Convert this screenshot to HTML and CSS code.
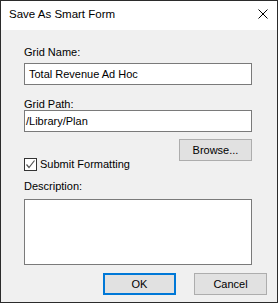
FILE: index.html
```html
<!DOCTYPE html>
<html lang="en">
<head>
    <meta charset="UTF-8">
    <title>Save As Smart Form</title>
    <link rel="stylesheet" href="styles.css">
</head>
<body>
    <div class="dialog">
        <!-- Title bar -->
        <div class="titlebar">
            <span class="title">Save As Smart Form</span>
            <svg class="close" width="10" height="10" viewBox="0 0 10 10">
                <path d="M0.5 0.5 L9.5 9.5 M9.5 0.5 L0.5 9.5" stroke="#000" stroke-width="1" fill="none"/>
            </svg>
        </div>

        <div class="content">
            <label class="label first">Grid Name:</label>
            <div class="field">Total Revenue Ad Hoc</div>

            <label class="label second">Grid Path:</label>
            <div class="field path">/Library/Plan</div>

            <div class="browse-row">
                <button class="btn">Browse...</button>
            </div>

            <div class="check-row">
                <span class="checkbox">
                    <svg width="11" height="11" viewBox="0 0 11 11">
                        <path d="M1.5 5.5 L4 8.5 L9.5 1.5" stroke="#555" stroke-width="1.2" fill="none"/>
                    </svg>
                </span>
                <span>Submit Formatting</span>
            </div>

            <label class="label third">Description:</label>
            <div class="field area"></div>

            <div class="actions">
                <button class="btn default">OK</button>
                <button class="btn">Cancel</button>
            </div>
        </div>
    </div>
</body>
</html>
```

FILE: styles.css
```css
body {
    margin: 0;
    font-family: "Liberation Sans", Arial, sans-serif;
    font-size: 11px;
    line-height: 15px;
    color: #000;
}

.dialog {
    width: 278px;
    height: 303px;
    box-sizing: border-box;
    border: 1px solid #2b2b2b;
    background-color: #f0f0f0;
}

.titlebar {
    height: 29px;
    background-color: #fff;
    display: flex;
    justify-content: space-between;
    padding: 6px 9px 0 8px;
    box-sizing: border-box;
    font-size: 11.5px;
}

.close {
    margin-top: 2px;
}

.content {
    padding-left: 23px;
    width: 228px;
}

.label {
    display: block;
}

.label.first {
    padding-top: 15px;
}

.label.second {
    margin-top: 12px;
}

.label.third {
    margin-top: 7px;
}

.field {
    height: 22px;
    box-sizing: border-box;
    border: 1px solid #7a7a7a;
    background-color: #fff;
    padding: 3px 4px;
    margin-top: 3px;
}

.field.path {
    margin-top: -2px;
    padding-left: 1px;
}

.field.area {
    height: 66px;
    margin-top: 5px;
}

.btn {
    width: 73px;
    height: 22px;
    box-sizing: border-box;
    border: 1px solid #adadad;
    background-color: #e1e1e1;
    font-family: inherit;
    font-size: 11px;
    color: #000;
    padding: 0;
}

.btn.default {
    border: 2px solid #0078d7;
}

.browse-row {
    display: flex;
    justify-content: flex-end;
    margin-top: 7px;
}

.check-row {
    display: flex;
    align-items: center;
    gap: 3px;
    margin-top: -4px;
}

.checkbox {
    width: 13px;
    height: 13px;
    box-sizing: border-box;
    border: 1px solid #333;
    background-color: #fff;
    display: flex;
}

.actions {
    display: flex;
    justify-content: flex-end;
    gap: 18px;
    margin-top: 8px;
    margin-right: -15px;
}
```
